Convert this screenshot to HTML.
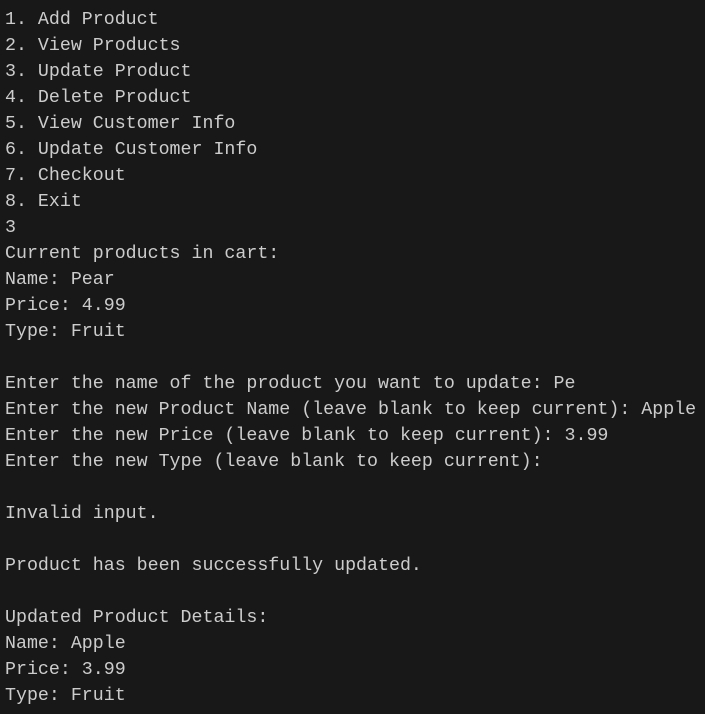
<!DOCTYPE html>
<html><head><meta charset="utf-8"><style>
html,body{margin:0;padding:0;background:#181818;width:705px;height:714px;overflow:hidden}
pre{margin:0;padding:7px 0 0 5px;font-family:"Liberation Mono",monospace;font-size:18.3px;line-height:26px;color:#cccccc;white-space:pre}
</style></head><body><pre>1. Add Product
2. View Products
3. Update Product
4. Delete Product
5. View Customer Info
6. Update Customer Info
7. Checkout
8. Exit
3
Current products in cart:
Name: Pear
Price: 4.99
Type: Fruit

Enter the name of the product you want to update: Pe
Enter the new Product Name (leave blank to keep current): Apple
Enter the new Price (leave blank to keep current): 3.99
Enter the new Type (leave blank to keep current):

Invalid input.

Product has been successfully updated.

Updated Product Details:
Name: Apple
Price: 3.99
Type: Fruit</pre></body></html>
